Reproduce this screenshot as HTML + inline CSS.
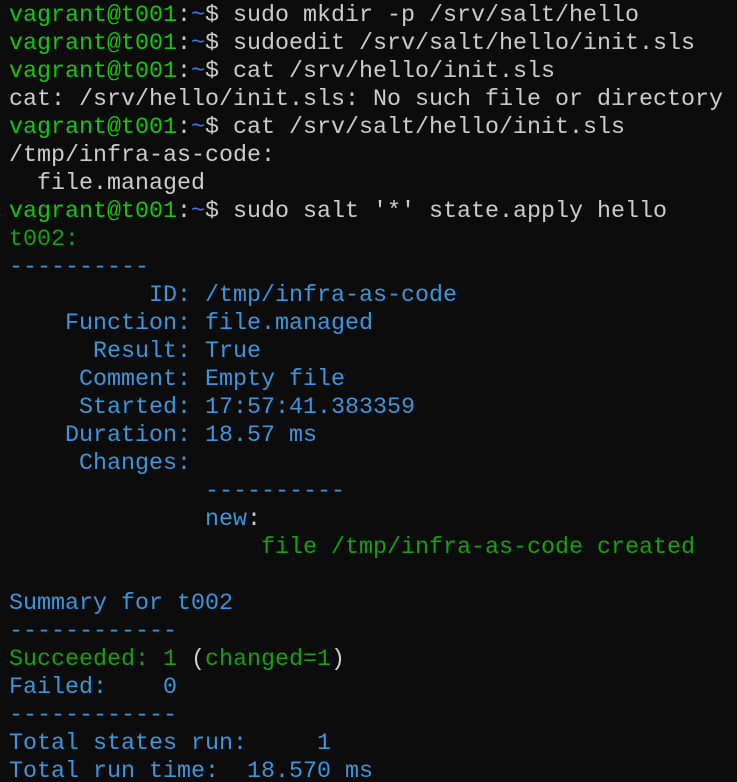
<!DOCTYPE html>
<html><head><style>
html,body{margin:0;padding:0;background:#0c0c0c;width:737px;height:782px;overflow:hidden}
pre{margin:0;padding:2px 0 0 9px;font-family:"Liberation Mono","DejaVu Sans Mono",monospace;font-size:23.33px;line-height:28px;color:#cccccc;white-space:pre}
.g{color:#16c60c}.G{color:#13a10e}.b{color:#3a96dd}.t{color:#3b78ff}
</style></head><body><pre><span class="g">vagrant@t001</span>:<span class="t">~</span>$ sudo mkdir -p /srv/salt/hello
<span class="g">vagrant@t001</span>:<span class="t">~</span>$ sudoedit /srv/salt/hello/init.sls
<span class="g">vagrant@t001</span>:<span class="t">~</span>$ cat /srv/hello/init.sls
cat: /srv/hello/init.sls: No such file or directory
<span class="g">vagrant@t001</span>:<span class="t">~</span>$ cat /srv/salt/hello/init.sls
/tmp/infra-as-code:
  file.managed
<span class="g">vagrant@t001</span>:<span class="t">~</span>$ sudo salt '*' state.apply hello
<span class="G">t002:</span>
<span class="b">----------</span>
<span class="b">          ID: /tmp/infra-as-code</span>
<span class="b">    Function: file.managed</span>
<span class="b">      Result: True</span>
<span class="b">     Comment: Empty file</span>
<span class="b">     Started: 17:57:41.383359</span>
<span class="b">    Duration: 18.57 ms</span>
<span class="b">     Changes:</span>
              <span class="b">----------</span>
              <span class="b">new</span>:
                  <span class="G">file /tmp/infra-as-code created</span>

<span class="b">Summary for t002</span>
<span class="b">------------</span>
<span class="G">Succeeded: 1</span> (<span class="G">changed=1</span>)
<span class="b">Failed:    0</span>
<span class="b">------------</span>
<span class="b">Total states run:     1</span>
<span class="b">Total run time:  18.570 ms</span></pre></body></html>
